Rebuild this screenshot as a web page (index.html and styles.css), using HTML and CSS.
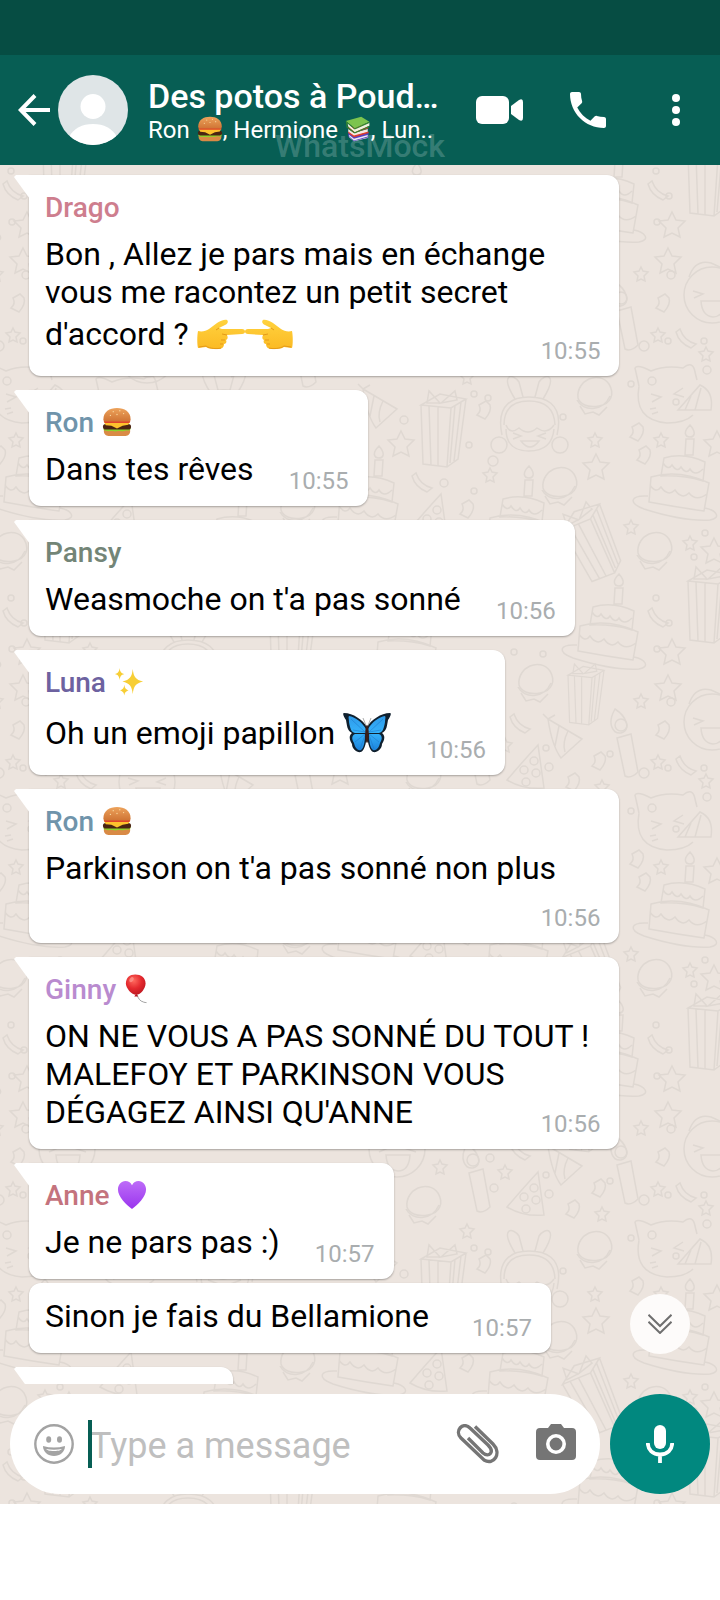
FILE: index.html
```html
<!DOCTYPE html>
<html lang="fr">
<head>
    <meta charset="UTF-8">
    <meta name="viewport" content="width=device-width, initial-scale=1.0">
    <title>Des potos à Poudlard</title>
    <link rel="stylesheet" href="styles.css">
</head>
<body>
    <!-- Emojis -->
    <svg class="sprites" aria-hidden="true">
        <defs>
            <linearGradient id="bun" x1="0" y1="0" x2="0" y2="1">
                <stop offset="0" stop-color="#eda35c"/>
                <stop offset="1" stop-color="#cf7434"/>
            </linearGradient>
            <linearGradient id="skin" x1="0" y1="0" x2="0" y2="1">
                <stop offset="0" stop-color="#ffd23e"/>
                <stop offset="1" stop-color="#fbba24"/>
            </linearGradient>
            <linearGradient id="wing" x1="0" y1="0" x2="0" y2="1">
                <stop offset="0" stop-color="#2f9bea"/>
                <stop offset="0.5" stop-color="#35b2fb"/>
                <stop offset="1" stop-color="#1c83dc"/>
            </linearGradient>
            <radialGradient id="red" cx="0.4" cy="0.3" r="0.8">
                <stop offset="0" stop-color="#ff6a5e"/>
                <stop offset="0.5" stop-color="#e4292e"/>
                <stop offset="1" stop-color="#b5141e"/>
            </radialGradient>
            <linearGradient id="purple" x1="0" y1="0" x2="0" y2="1">
                <stop offset="0" stop-color="#bd6cf8"/>
                <stop offset="1" stop-color="#9a35ee"/>
            </linearGradient>
            <symbol id="burger" viewBox="0 0 32 32">
                <path d="M2 24h28v2c0 3-3 5-6 5H8c-3 0-6-2-6-5z" fill="#d98a45"/>
                <path d="M1.500 23c2-1.500 4 0 6-.5s4 .5 6 0 4 .5 7 0 6-1 10 0c0 3-2 3-4 2.600s-4 1.400-7 .6-4 .8-7 .2-5 .4-7-.2-4-.3-4-2.700z" fill="#8ed02c"/>
                <rect x="1" y="18" width="30" height="6" rx="3" fill="#4a2412"/>
                <path d="M2 16h28l-2 3-6 1-6 3-6-3-6-.500z" fill="#fdc22d"/>
                <rect x="2" y="14" width="28" height="3" rx="1.500" fill="#e0452c"/>
                <path d="M1.500 13C1.500 5 8 1 16 1s14.500 4 14.500 12c0 2-1 2.500-2.500 2.500H4c-1.500 0-2.500-.5-2.500-2.500z" fill="url(#bun)"/>
                <g fill="#f8d9a0"><circle cx="12" cy="5" r=".7"/><circle cx="19" cy="4" r=".7"/><circle cx="23" cy="7" r=".7"/><circle cx="16" cy="8" r=".7"/><circle cx="9" cy="9" r=".7"/></g>
            </symbol>
            <symbol id="books" viewBox="0 0 32 32">
                <path d="M5 22l5 4 18-4v5l-17 4-6-5z" fill="#eceaf4"/>
                <path d="M4 20l7 5 18-4v2l-18 5-6-5v2l6 5 18-5v1l-18 5-7-6z" fill="#5b3fc0"/>
                <path d="M4 16l7 5 17-5v4l-17 5-7-5z" fill="#f6e6e0"/>
                <path d="M3 14l22-4 4 5-18 6zM4 19l7 5 18-5v2l-18 5-7-5z" fill="#e23a2e"/>
                <path d="M3 9l8 7 19-8v4l-18 8-8-7z" fill="#f1f2df"/>
                <path d="M1 6L20 1l10 6-18 8z" fill="#7cc44e"/>
                <path d="M1 6l11 9L30 7v1.500l-18 8L3 9v4l9 7 18-8v1.500l-18 8L2 14z" fill="#35862f"/>
            </symbol>
            <symbol id="sparkles" viewBox="0 0 32 32">
                <g fill="#f7ce35">
                    <path d="M20 2c1 9 3 11 11 13.500C23 18 21 20 20 29c-1-9-3-11-11-13.500C17 13 19 11 20 2z"/>
                    <path d="M6 1c.5 4 1.500 5.500 5 6.500-3.500 1-4.500 2.500-5 6.500-.5-4-1.500-5.500-5-6.500 3.500-1 4.500-2.500 5-6.500z"/>
                    <path d="M11 19c.5 3.500 1.500 5 4.500 6-3 1-4 2-4.500 5.500-.5-3.500-1.500-4.500-4.500-5.500 3-1 4-2.500 4.500-6z"/>
                </g>
            </symbol>
            <symbol id="balloon" viewBox="0 0 32 32">
                <path d="M14 22c1 4 3 7 7 8 1 .3 2 .5 3 .5" fill="none" stroke="#9a9a9a"/>
                <path d="M13 21l-2 3h4z" fill="#b5141e"/>
                <path d="M2 10C2 4 6 .5 12 .5S23 4 23 10c0 5-5 12-10 12S2 15 2 10z" fill="url(#red)"/>
                <ellipse cx="8" cy="6" rx="2" ry="3" fill="#ff9d93" opacity=".7" transform="rotate(30 8 6)"/>
            </symbol>
            <symbol id="heart" viewBox="0 0 32 32">
                <path d="M16 31C10 26 1 18 1 10c0-5 3.500-9 8-9 3 0 5.500 1.500 7 4.500C17.500 2.500 20 1 23 1c4.500 0 8 4 8 9 0 8-9 16-15 21z" fill="url(#purple)"/>
            </symbol>
            <symbol id="point" viewBox="0 0 48 47">
                <path d="M1 20c4 1 8 0 11-2l8-6c3-2 8-4 10-3 2 2 0 4-2 5l-6 3c2 1 4 1 6 1h17c4 0 4 5 0 5l-15 1c1 2 1 4-1 5 1 2 0 4-2 4 0 3-2 5-6 5-5 0-9 0-12-2l-8 1c-1-4-1-12 0-17z" fill="url(#skin)"/>
                <path d="M22 17l-3 2M30 24l-5-1M28 29h-4M26 33h-3M2 36l7-1c4 3 12 3 15 2" fill="none" stroke="#e59a18" stroke-width="1"/>
            </symbol>
            <symbol id="butterfly" viewBox="0 0 48 47">
                <g id="half">
                    <path d="M24 17C20 10 10 3 1 3c-2 0 0 4 2 7 1 5 1 11 6 13-4 3-2 8 0 11 0 5 5 9 9 8 4-2 6-12 6-20z" fill="#10202e"/>
                    <path d="M23 19C19 12 12 7 6 6c-1 1 0 3 0 6 1 6 2 10 6 11h11zM22 24H12c-4 2-3 6-1 9 1 5 4 8 7 7 3-2 4-9 4-16z" fill="url(#wing)"/>
                    <path d="M22 22L8 9M22 22l-12-2M22 24l-10 8M22 25l-5 14" stroke="#1c74c4" stroke-width=".5" fill="none"/>
                    <path d="M24 18L20 8" stroke="#777" stroke-width=".6"/>
                </g>
                <use href="#half" transform="translate(48 0) scale(-1 1)"/>
                <ellipse cx="24" cy="24" rx="1.800" ry="9" fill="#3a1d17"/>
            </symbol>

            <!-- Fond festif -->
            <path id="star" d="M0-13l4 8 9 1-7 7 2 9-8-4-8 4 2-9-7-7 9-1z"/>
            <path id="star-s" d="M0-7l2 4 5 1-4 4 1 5-4-2-4 2 1-5-4-4 5-1z"/>
            <g id="cake">
                <path d="M57 0c-8 8-4 12 0 12s7-4 0-12zM53 14h8l-1 16h-8zM31 33q20-6 41 4l-2 19q-20-6-42-5zM30 38q5 8 9 2 5 8 9 2 5 8 9 2 5 8 13 0M18 52q28-8 58 6l-5 28q-28-4-55-9zM17 60q6 9 11 2 7 10 14 3 7 10 14 3 7 9 18 1M15 71c-18-1-20 7-4 13 25 8 50 12 66 11 12-2 6-10-5-12"/>
            </g>
            <g id="gift">
                <path d="M0 14l30 3 15-9-26-5zM0 14l2 59 24 3 4-59M45 8l-8 60-11 8M8 15l2 59M17 16v59M34 14l-5 58M40 11l-7 59M19 12L8 0 6 12zM20 12L34 0l2 9z"/>
            </g>
            <g id="girl">
                <path d="M11 58C4 25 25 20 38 20s36 4 28 38M24 22C8-4 22-4 28 5l4 15M52 22C68-4 54-4 48 5l-4 15M13 48q0-24 25-24t26 24M15 48q4 10 13 3 9 8 18 0 10 7 17-3M15 52q0 22 23 22t25-22M22 56l8 3-8 3M55 56l-8 3 8 3M30 64h18q-9 12-18 0z"/>
                <circle cx="8" cy="68" r="8"/><circle cx="69" cy="68" r="8"/>
            </g>
            <g id="macaron">
                <path d="M1 20C-1 2 22-8 32 6c6 10 2 20-10 22C10 30 3 26 1 20zM0 22c6 12 26 12 33-4M3 28l5 8 8-2 6 3 8-8"/>
            </g>
            <g id="cat">
                <path d="M4 22L0 4Q2 0 16 7q14-6 32-3Q58-4 60 8l2 8M4 22q-6 34 28 37 18 0 26-8M16 30l10 3-9 5M48 24l-9 6 10 3M15 45l6-1M17 50l6-2M43 46l22-25q14 6 11 25zM50 46l6-14M60 46l6-22"/>
                <circle cx="41" cy="38" r="3"/>
            </g>
            <g id="candle">
                <path d="M3 1C-6 17 2 26 9 25 20 22 14 8 3 1zM5 30l14-4 7 38q-7 7-13 4z"/>
                <circle cx="9" cy="17" r="6"/>
            </g>
            <g id="pizza">
                <path d="M31 0Q18 14 0 35q17 10 37 8z"/>
                <circle cx="27" cy="16" r="4"/><circle cx="17" cy="25" r="4"/><circle cx="29" cy="28" r="4"/><circle cx="19" cy="37" r="4"/>
            </g>
            <g id="hat">
                <path d="M5 5l34 20-21 19q-9-12-13-39zM16 12l-4 20M25 17q-6 12-3 21M5 5L0 0M5 5l7-4"/>
            </g>
            <g id="laugh">
                <circle cx="27" cy="32" r="28"/>
                <path d="M4 14q6-18 22-14 10 4 18 10M8 28l10 3-9 4M46 28l-9 4 9 3M16 38h24q-1 16-12 16-11-1-12-16z"/>
            </g>
            <path id="ribbon" d="M0 0q4 12 16 15l-5 4Q-1 14-4 3z"/>
            <path id="flag" d="M0 4l7-4 4 4q2 6-5 14l-8-4q5-4 2-10z"/>
            <g id="tile">
                <use href="#cat" x="635" y="364"/>
                <use href="#cake" x="633" y="425"/>
                <use href="#girl" x="491" y="377"/>
                <use href="#gift" x="421" y="391"/>
                <use href="#macaron" x="577" y="378"/>
                <use href="#cake" x="472" y="466"/>
                <use href="#macaron" x="542" y="468"/>
                <use href="#gift" transform="translate(556 518) rotate(-28)"/>
                <use href="#macaron" x="637" y="533"/>
                <use href="#gift" x="688" y="567"/>
                <use href="#cake" x="562" y="574"/>
                <use href="#macaron" x="518" y="665"/>
                <use href="#gift" transform="translate(568 664) scale(.8)"/>
                <use href="#hat" x="543" y="714"/>
                <use href="#candle" x="612" y="708"/>
                <use href="#candle" x="464" y="716"/>
                <use href="#pizza" x="507" y="745"/>
                <use href="#laugh" x="685" y="690"/>
                <use href="#macaron" x="406" y="760"/>
                <use href="#pizza" x="410" y="494"/>
                <use href="#laugh" x="370" y="690"/>
                <use href="#cake" x="322" y="446"/>
                <use href="#hat" x="358" y="384"/>
                <use href="#girl" x="186" y="370"/>
                <use href="#cat" x="96" y="375"/>
                <use href="#cake" x="186" y="486"/>
                <use href="#pizza" x="100" y="498"/>
                <use href="#macaron" x="280" y="490"/>
                <use href="#gift" x="270" y="610"/>
                <use href="#cake" x="360" y="590"/>
                <use href="#girl" x="150" y="620"/>
                <use href="#hat" x="214" y="760"/>
                <use href="#laugh" x="120" y="750"/>
                <use href="#candle" x="290" y="745"/>
                <use href="#star" x="401" y="444"/><use href="#star" x="596" y="467"/>
                <use href="#star" x="717" y="444"/><use href="#star" x="672" y="652"/>
                <use href="#star" x="668" y="688"/><use href="#star" x="714" y="551"/>
                <use href="#star" x="340" y="772"/><use href="#star" x="262" y="466"/>
                <use href="#star-s" x="595" y="440"/><use href="#star-s" x="661" y="440"/>
                <use href="#star-s" x="641" y="701"/><use href="#star-s" x="658" y="762"/>
                <use href="#star-s" x="706" y="781"/><use href="#star-s" x="690" y="543"/>
                <use href="#star-s" x="631" y="527"/><use href="#star-s" x="490" y="475"/>
                <use href="#star-s" x="467" y="377"/><use href="#star-s" x="440" y="740"/>
                <use href="#star-s" x="505" y="745"/><use href="#star-s" x="602" y="787"/>
                <use href="#star-s" x="90" y="650"/><use href="#star-s" x="160" y="478"/>
                <use href="#ribbon" x="416" y="473"/><use href="#ribbon" x="652" y="608"/>
                <use href="#ribbon" x="680" y="756"/><use href="#ribbon" x="514" y="714"/>
                <use href="#ribbon" x="80" y="770"/>
                <use href="#flag" x="479" y="401"/><use href="#flag" x="462" y="500"/>
                <use href="#flag" x="639" y="446"/><use href="#flag" x="658" y="721"/>
                <use href="#flag" x="594" y="752"/><use href="#flag" x="568" y="773"/>
                <use href="#flag" x="632" y="423"/>
                <circle cx="404" cy="420" r="4"/><circle cx="493" cy="461" r="5"/><circle cx="444" cy="483" r="4"/>
                <circle cx="474" cy="491" r="3"/><circle cx="563" cy="417" r="3"/><circle cx="469" cy="445" r="3"/>
                <circle cx="474" cy="394" r="3"/><circle cx="488" cy="398" r="3"/><circle cx="644" cy="346" r="5"/>
                <circle cx="631" cy="384" r="3"/><circle cx="652" cy="381" r="4"/><circle cx="707" cy="370" r="4"/>
                <circle cx="694" cy="557" r="3"/><circle cx="705" cy="533" r="3"/><circle cx="656" cy="598" r="3"/>
                <circle cx="669" cy="623" r="3"/><circle cx="657" cy="649" r="3"/><circle cx="671" cy="702" r="4"/>
                <circle cx="549" cy="767" r="4"/><circle cx="546" cy="748" r="3"/><circle cx="610" cy="754" r="3"/>
                <circle cx="514" cy="652" r="3"/><circle cx="543" cy="654" r="3"/><circle cx="494" cy="761" r="4"/>
                <circle cx="490" cy="731" r="4"/><circle cx="668" cy="341" r="3"/><circle cx="704" cy="341" r="3"/>
            </g>
        </defs>
    </svg>

    <div class="status-bar"></div>

    <header class="header">
        <button class="back" type="button" aria-label="Retour">
            <svg width="32" height="32" viewBox="0 0 32 32" fill="none" stroke="#fff" stroke-width="4">
                <path d="M32 16H3M17 1.500L2.800 16 17 30.500"/>
            </svg>
        </button>
        <svg class="avatar" viewBox="0 0 70 70" role="img" aria-label="Photo du groupe">
            <clipPath id="round"><circle cx="35" cy="35" r="35"/></clipPath>
            <g clip-path="url(#round)">
                <rect width="70" height="70" fill="#dfe5e7"/>
                <circle cx="35" cy="31.500" r="12.500" fill="#fff"/>
                <path d="M11 62c5-9 13-13 24-13s19 4 24 13v8H11z" fill="#fff"/>
            </g>
        </svg>
        <div class="group">
            <h1>Des potos à Poud…</h1>
            <p>Ron <svg class="emoji-mini" role="img" aria-label="burger"><use href="#burger"/></svg>, Hermione <svg class="emoji-mini" role="img" aria-label="livres"><use href="#books"/></svg>, Lun..</p>
        </div>
        <div class="actions">
            <button type="button" aria-label="Appel vidéo">
                <svg width="48" height="28" viewBox="0 0 48 28" fill="#fff">
                    <rect x="0" y="0" width="33" height="28" rx="6"/>
                    <path d="M35 10l8-6q4-2 4 2v16q0 4-4 2l-8-6z"/>
                </svg>
            </button>
            <button type="button" aria-label="Appel">
                <svg width="36" height="36" viewBox="3 3 18 18" fill="#fff">
                    <path d="M6.620 10.790c1.440 2.830 3.760 5.140 6.590 6.590l2.200-2.200c.27-.27.67-.36 1.020-.24 1.120.37 2.330.57 3.570.57.55 0 1 .45 1 1V20c0 .55-.45 1-1 1-9.390 0-17-7.610-17-17 0-.55.45-1 1-1h3.500c.55 0 1 .45 1 1 0 1.250.2 2.450.57 3.570.11.35.03.74-.25 1.020l-2.200 2.200z"/>
                </svg>
            </button>
            <button type="button" aria-label="Menu">
                <svg width="8" height="32" viewBox="0 0 8 32" fill="#fff">
                    <circle cx="4" cy="4" r="4"/><circle cx="4" cy="16" r="4"/><circle cx="4" cy="28" r="4"/>
                </svg>
            </button>
        </div>
        <span class="watermark">WhatsMock</span>
    </header>

    <main class="chat">
        <svg class="wallpaper" aria-hidden="true">
            <g transform="translate(0 -165)">
                <use href="#tile" x="-645" y="-427"/><use href="#tile" y="-427"/><use href="#tile" x="645" y="-427"/>
                <use href="#tile" x="-645"/><use href="#tile"/><use href="#tile" x="645"/>
                <use href="#tile" x="-645" y="427"/><use href="#tile" y="427"/><use href="#tile" x="645" y="427"/>
                <use href="#tile" x="-645" y="854"/><use href="#tile" y="854"/><use href="#tile" x="645" y="854"/>
                <use href="#tile" x="-645" y="1281"/><use href="#tile" y="1281"/><use href="#tile" x="645" y="1281"/>
            </g>
        </svg>

        <div class="messages">
            <article class="bubble tail">
                <h2 class="drago">Drago</h2>
                <p>Bon , Allez je pars mais en échange vous me racontez un petit secret d'accord ? <svg class="emoji-big" role="img" aria-label="doigt vers la droite"><use href="#point"/></svg><svg class="emoji-big flip" role="img" aria-label="doigt vers la gauche"><use href="#point"/></svg><span class="room"></span></p>
                <time>10:55</time>
            </article>

            <article class="bubble tail">
                <h2 class="ron">Ron <svg class="emoji" role="img" aria-label="burger"><use href="#burger"/></svg></h2>
                <p>Dans tes rêves<span class="room"></span></p>
                <time>10:55</time>
            </article>

            <article class="bubble tail">
                <h2 class="pansy">Pansy</h2>
                <p>Weasmoche on t'a pas sonné<span class="room"></span></p>
                <time>10:56</time>
            </article>

            <article class="bubble tail">
                <h2 class="luna">Luna <svg class="emoji" role="img" aria-label="étincelles"><use href="#sparkles"/></svg></h2>
                <p>Oh un emoji papillon <svg class="emoji-big" role="img" aria-label="papillon"><use href="#butterfly"/></svg><span class="room"></span></p>
                <time>10:56</time>
            </article>

            <article class="bubble tail">
                <h2 class="ron">Ron <svg class="emoji" role="img" aria-label="burger"><use href="#burger"/></svg></h2>
                <p>Parkinson on t'a pas sonné non plus<span class="room"></span></p>
                <time>10:56</time>
            </article>

            <article class="bubble tail">
                <h2 class="ginny">Ginny <svg class="emoji" role="img" aria-label="ballon"><use href="#balloon"/></svg></h2>
                <p>ON NE VOUS A PAS SONNÉ DU TOUT ! MALEFOY ET PARKINSON VOUS DÉGAGEZ AINSI QU'ANNE<span class="room"></span></p>
                <time>10:56</time>
            </article>

            <article class="bubble tail">
                <h2 class="anne">Anne <svg class="emoji" role="img" aria-label="coeur violet"><use href="#heart"/></svg></h2>
                <p>Je ne pars pas :)<span class="room"></span></p>
                <time>10:57</time>
            </article>

            <article class="bubble follow">
                <p>Sinon je fais du Bellamione<span class="room"></span></p>
                <time>10:57</time>
            </article>

            <article class="bubble tail upcoming"></article>

            <button class="scroll-down" type="button" aria-label="Derniers messages">
                <svg width="24" height="20" viewBox="0 0 24 20" fill="none" stroke="#6f6f6f" stroke-width="2">
                    <path d="M.5 .8L12 12 23.500 .8M.5 7.800L12 19 23.500 7.800"/>
                </svg>
            </button>
        </div>

        <form class="composer">
            <div class="field">
                <button type="button" aria-label="Emoji">
                    <svg width="40" height="40" viewBox="0 0 40 40" fill="#a3a3a3">
                        <circle cx="20" cy="20" r="18.700" fill="none" stroke="#a3a3a3" stroke-width="2.400"/>
                        <ellipse cx="14.700" cy="15.500" rx="2.500" ry="3.300"/>
                        <ellipse cx="25.500" cy="15.500" rx="2.500" ry="3.300"/>
                        <path d="M9 22q11 3 22 0c0 6-5 10-11 10S9 28 9 22zm3 3c1 1 3 2 8 2s7-1 8-2q-8 1.500-16 0z" fill-rule="evenodd"/>
                    </svg>
                </button>
                <div class="entry">
                    <input type="text" aria-label="Message" placeholder="Type a message">
                    <span class="caret"></span>
                </div>
                <button type="button" aria-label="Joindre un fichier">
                    <svg width="44" height="40" viewBox="0 0 44 40" fill="none" stroke="#757575" stroke-width="3.400">
                        <path d="M19 2.500L37 20c9 9 1 22-9 16L5 14C-2 7 7-3 14 4l18 17c7 7 1 13-5 8L12 14"/>
                    </svg>
                </button>
                <button type="button" aria-label="Appareil photo">
                    <svg width="40" height="40" viewBox="0 0 40 40" fill="#757575">
                        <path d="M4 4h8l3-4h10l3 4h8q4 0 4 4v24q0 4-4 4H4q-4 0-4-4V8q0-4 4-4z"/>
                        <circle cx="20" cy="20" r="8.200" fill="none" stroke="#fff" stroke-width="3.600"/>
                    </svg>
                </button>
            </div>
            <button class="mic" type="button" aria-label="Message vocal">
                <svg width="28" height="40" viewBox="0 0 28 40">
                    <rect x="8" y="1" width="12" height="24" rx="6" fill="#fff"/>
                    <path d="M1.800 19c0 7 5 11.500 12.200 11.500S26.200 26 26.200 19M14 30v9" fill="none" stroke="#fff" stroke-width="3.800"/>
                </svg>
            </button>
        </form>
    </main>

    <div class="nav-space"></div>
</body>
</html>
```
FILE: styles.css
```css
* {
    box-sizing: border-box;
}

body {
    margin: 0;
    height: 100vh;
    display: flex;
    flex-direction: column;
    font-family: Roboto, "Liberation Sans", sans-serif;
    background-color: #fff;
}

h1, h2, p {
    margin: 0;
}

button {
    display: flex;
    align-items: center;
    justify-content: center;
    flex-shrink: 0;
    padding: 0;
    border: none;
    background: none;
    cursor: pointer;
}

.sprites {
    position: absolute;
    width: 0;
    height: 0;
}

/* Barre du haut */
.status-bar {
    flex: 0 0 55px;
    background-color: #064d43;
}

.header {
    position: relative;
    flex: 0 0 110px;
    display: flex;
    align-items: center;
    padding-left: 18px;
    background-color: #075e54;
    color: #fff;
}

.avatar {
    width: 70px;
    height: 70px;
    margin: 0 20px 0 8px;
    flex-shrink: 0;
}

.group {
    flex: 1;
    min-width: 0;
    white-space: nowrap;
}

.group h1 {
    font-size: 34px;
    line-height: 40px;
    font-weight: 500;
}

.group p {
    font-size: 24px;
    line-height: 28px;
}

.actions {
    display: flex;
}

.actions button {
    width: 88px;
    height: 88px;
}

.watermark {
    position: absolute;
    left: 0;
    right: 0;
    bottom: 1px;
    text-align: center;
    font-size: 32px;
    line-height: 36px;
    font-weight: 500;
    color: rgba(255, 255, 255, 0.2);
    pointer-events: none;
}

/* Discussion */
.chat {
    position: relative;
    flex: 1;
    min-height: 0;
    display: flex;
    flex-direction: column;
    background-color: #ece4de;
}

.wallpaper {
    position: absolute;
    top: 0;
    left: 0;
    width: 100%;
    height: 100%;
    fill: none;
    stroke: #dfd8d2;
    stroke-width: 1.5;
}

.messages {
    position: relative;
    flex: 1;
    min-height: 0;
    display: flex;
    flex-direction: column;
    align-items: flex-start;
    gap: 14px;
    padding-top: 10px;
    overflow: hidden;
}

.bubble {
    position: relative;
    flex-shrink: 0;
    max-width: 82%;
    margin-left: 29px;
    padding: 15px 18px 18px 16px;
    border-radius: 12px;
    background-color: #fff;
    box-shadow: 0 1px 2px rgba(0, 0, 0, 0.3);
}

.bubble h2 {
    margin-bottom: 9px;
    font-size: 28px;
    line-height: 36px;
    height: 36px;
    font-weight: 500;
}

.bubble p {
    font-size: 32px;
    line-height: 38px;
    color: #000;
}

.bubble time {
    position: absolute;
    right: 19px;
    bottom: 11px;
    font-size: 24px;
    line-height: 28px;
    color: #a9adaf;
}

/* garde la place de l'heure en fin de texte */
.room {
    display: inline-block;
    width: 96px;
    height: 1px;
}

.tail {
    border-top-left-radius: 0;
}

.tail::before {
    content: "";
    position: absolute;
    top: 0;
    left: -15px;
    width: 16px;
    height: 24px;
    background-color: #fff;
    clip-path: polygon(0 2px, 2px 0, 100% 0, 100% 100%);
}

.follow {
    margin-top: -10px;
    padding-top: 14px;
}

.follow .room {
    width: 104px;
}

.upcoming {
    width: 204px;
    height: 116px;
}

.drago { color: #ce7e8e; }
.ron { color: #7094ab; }
.pansy { color: #738577; }
.luna { color: #6d62a0; }
.ginny { color: #b98bcf; }
.anne { color: #c4737d; }

.emoji {
    width: 30px;
    height: 30px;
    margin-left: 1px;
    vertical-align: -5px;
}

.emoji-mini {
    width: 26px;
    height: 26px;
    margin-left: 1px;
    vertical-align: -4px;
}

.emoji-big {
    width: 48px;
    height: 47px;
    vertical-align: -13px;
}

.flip {
    transform: scaleX(-1);
}

.scroll-down {
    position: absolute;
    right: 30px;
    bottom: 30px;
    width: 60px;
    height: 60px;
    border-radius: 50%;
    background-color: #fdfbfa;
}

/* Saisie */
.composer {
    position: relative;
    display: flex;
    gap: 10px;
    padding: 10px;
}

.field {
    flex: 1;
    min-width: 0;
    height: 100px;
    display: flex;
    align-items: center;
    padding: 0 5px;
    border-radius: 50px;
    background-color: #fff;
}

.field button {
    width: 78px;
    height: 78px;
}

.entry {
    position: relative;
    flex: 1;
    min-width: 0;
    margin-left: -5px;
}

.entry input {
    display: block;
    width: 100%;
    height: 48px;
    padding: 4px 0 0 2px;
    border: none;
    outline: none;
    background: none;
    font-family: inherit;
    font-size: 36px;
}

.entry input::placeholder {
    color: #bfbfbf;
}

.caret {
    position: absolute;
    left: 0;
    top: 0;
    width: 4px;
    height: 48px;
    background-color: #075e54;
}

.mic {
    width: 100px;
    height: 100px;
    border-radius: 50%;
    background-color: #01887f;
}

.nav-space {
    flex: 0 0 96px;
}
```
